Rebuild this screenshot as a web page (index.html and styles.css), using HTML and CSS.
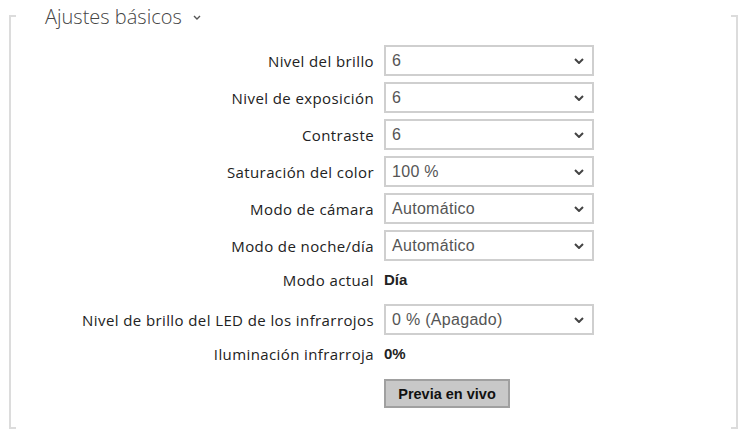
FILE: index.html
```html
<!DOCTYPE html>
<html lang="es">
<head>
<meta charset="utf-8">
<link rel="stylesheet" href="styles.css">
</head>
<body>
<section class="panel">
  <h2 class="panel-title">Ajustes básicos
    <svg class="title-chev" width="8" height="5" viewBox="0 0 8 5"><path d="M1 1 L4 4 L7 1" fill="none" stroke="#555" stroke-width="1.4"/></svg>
  </h2>
  <div class="form">
    <div class="row">
      <label class="lbl">Nivel del brillo</label>
      <div class="select"><span>6</span><svg class="chev" width="10" height="6" viewBox="0 0 10 6"><path d="M1 1 L5 5 L9 1" fill="none" stroke="#444" stroke-width="2"/></svg></div>
    </div>
    <div class="row">
      <label class="lbl">Nivel de exposición</label>
      <div class="select"><span>6</span><svg class="chev" width="10" height="6" viewBox="0 0 10 6"><path d="M1 1 L5 5 L9 1" fill="none" stroke="#444" stroke-width="2"/></svg></div>
    </div>
    <div class="row">
      <label class="lbl">Contraste</label>
      <div class="select"><span>6</span><svg class="chev" width="10" height="6" viewBox="0 0 10 6"><path d="M1 1 L5 5 L9 1" fill="none" stroke="#444" stroke-width="2"/></svg></div>
    </div>
    <div class="row">
      <label class="lbl">Saturación del color</label>
      <div class="select"><span>100 %</span><svg class="chev" width="10" height="6" viewBox="0 0 10 6"><path d="M1 1 L5 5 L9 1" fill="none" stroke="#444" stroke-width="2"/></svg></div>
    </div>
    <div class="row">
      <label class="lbl">Modo de cámara</label>
      <div class="select"><span>Automático</span><svg class="chev" width="10" height="6" viewBox="0 0 10 6"><path d="M1 1 L5 5 L9 1" fill="none" stroke="#444" stroke-width="2"/></svg></div>
    </div>
    <div class="row">
      <label class="lbl">Modo de noche/día</label>
      <div class="select"><span>Automático</span><svg class="chev" width="10" height="6" viewBox="0 0 10 6"><path d="M1 1 L5 5 L9 1" fill="none" stroke="#444" stroke-width="2"/></svg></div>
    </div>
    <div class="row row-text">
      <label class="lbl">Modo actual</label>
      <div class="value">Día</div>
    </div>
    <div class="row">
      <label class="lbl">Nivel de brillo del LED de los infrarrojos</label>
      <div class="select"><span>0 % (Apagado)</span><svg class="chev" width="10" height="6" viewBox="0 0 10 6"><path d="M1 1 L5 5 L9 1" fill="none" stroke="#444" stroke-width="2"/></svg></div>
    </div>
    <div class="row row-text">
      <label class="lbl">Iluminación infrarroja</label>
      <div class="value">0%</div>
    </div>
    <div class="row">
      <span class="lbl"></span>
      <button class="btn" type="button">Previa en vivo</button>
    </div>
  </div>
</section>
</body>
</html>
```
FILE: styles.css
```css
html, body {
  margin: 0;
  padding: 0;
  background: #fff;
}
body {
  font-family: "Open Sans", "Noto Sans", sans-serif;
  color: #222;
}
.panel {
  margin-left: 9px;
  width: 729px;
  height: 430px;
  box-sizing: border-box;
  background-image:
    linear-gradient(#dcdcdc, #dcdcdc),
    linear-gradient(#dcdcdc, #dcdcdc),
    linear-gradient(#dcdcdc, #dcdcdc),
    linear-gradient(#dcdcdc, #dcdcdc),
    linear-gradient(#dcdcdc, #dcdcdc),
    linear-gradient(#dcdcdc, #dcdcdc);
  background-repeat: no-repeat;
  background-size:
    2px 414px,
    7px 2px,
    7px 2px,
    2px 414px,
    7px 2px,
    7px 2px;
  background-position:
    0 15px,
    0 15px,
    0 427px,
    727px 15px,
    722px 15px,
    722px 427px;
}
.panel-title {
  margin: 0;
  padding: 4px 0 0 36px;
  height: 45px;
  box-sizing: border-box;
  font-size: 20px;
  font-weight: 300;
  line-height: 26px;
  color: #444;
  display: flex;
  align-items: flex-start;
}
.title-chev {
  margin-left: 11px;
  margin-top: 11px;
}
.form {
  display: flex;
  flex-direction: column;
  gap: 6px;
}
.row {
  display: grid;
  grid-template-columns: 365px 210px;
  column-gap: 10px;
  align-items: center;
  min-height: 31px;
}
.row-text {
  align-items: start;
}
.lbl {
  text-align: right;
  font-size: 15px;
  letter-spacing: 0.4px;
  line-height: 20px;
  color: #222;
}
.row-text .lbl,
.row-text .value {
  padding-top: 3px;
}
.select {
  height: 31px;
  box-sizing: border-box;
  border: 2px solid #cfcfcf;
  background: #fff;
  display: flex;
  align-items: center;
  justify-content: space-between;
  padding: 0 8px 0 6px;
  font-family: "Liberation Sans", Arial, sans-serif;
  font-size: 16px;
  letter-spacing: 0.3px;
  color: #555;
}
.chev {
  margin-top: 1px;
}
.value {
  font-family: "Liberation Sans", Arial, sans-serif;
  font-weight: bold;
  font-size: 15px;
  line-height: 20px;
  color: #222;
}
.btn {
  justify-self: start;
  width: 126px;
  height: 29px;
  box-sizing: border-box;
  border: 2px solid #a0a0a0;
  background: #c8c8c8;
  font-family: "Liberation Sans", Arial, sans-serif;
  font-weight: bold;
  font-size: 14.5px;
  color: #111;
  padding: 0;
}
```
